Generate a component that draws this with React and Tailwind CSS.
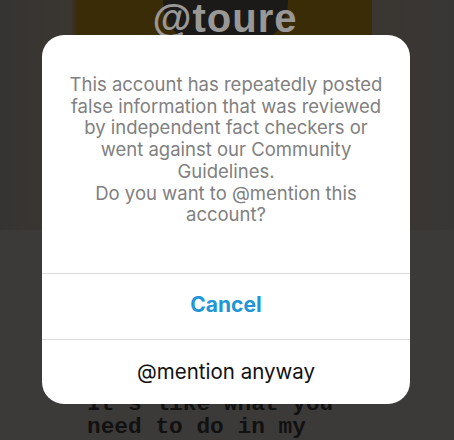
export default function App() {
  return (
    <div className="relative w-[454px] h-[440px] overflow-hidden bg-[#3b3a39]">
      {/* background story content */}
      <div className="flex flex-col w-full">
        <div className="flex w-full h-[230px]">
          <div className="w-[70px] bg-gradient-to-r from-[#363433] to-[#3a3630]" />
          <div className="w-[8px] bg-gradient-to-r from-[#3a3630] to-[#3a2c08]" />
          <div className="relative flex-1 bg-[#3a2c06] flex justify-center">
            <div className="absolute left-[85px] top-[-40px] w-[125px] h-[85px] rounded-full bg-[#1c1a18]" />
            <div className="relative mt-[-2px] text-[40px] leading-[40px] font-bold text-[#9a9896] tracking-[1px] [font-family:'Liberation_Sans',Arial,sans-serif]">
              @toure
            </div>
          </div>
          <div className="w-[82px] bg-gradient-to-r from-[#3a3631] to-[#383635]" />
        </div>
        <div className="pl-[87px] pt-[163px] text-[22.8px] leading-[23px] font-bold text-[#111] [font-family:'Liberation_Mono','Courier_New',monospace] whitespace-pre">
          <div>It's like what you</div>
          <div>need to do in my</div>
        </div>
      </div>

      {/* dialog overlay */}
      <div className="absolute left-[42px] top-[35px] w-[368px] h-[369px] rounded-[22px] bg-white flex flex-col [font-family:Inter,'Liberation_Sans',sans-serif]">
        <div className="h-[238px] pt-[39px] text-center text-[18.5px] leading-[21.7px] text-[#808080] whitespace-nowrap">
          <div>This account has repeatedly posted</div>
          <div>false information that was reviewed</div>
          <div>by independent fact checkers or</div>
          <div>went against our Community</div>
          <div>Guidelines.</div>
          <div>Do you want to @mention this</div>
          <div>account?</div>
        </div>
        <div className="h-px bg-[#dcdcdc]" />
        <div className="h-[65px] flex items-center justify-center text-[21px] font-bold text-[#2196d6] pb-[3px]">
          Cancel
        </div>
        <div className="h-px bg-[#dcdcdc]" />
        <div className="flex-1 flex items-center justify-center text-[20.5px] text-[#111]">
          @mention anyway
        </div>
      </div>
    </div>
  );
}
